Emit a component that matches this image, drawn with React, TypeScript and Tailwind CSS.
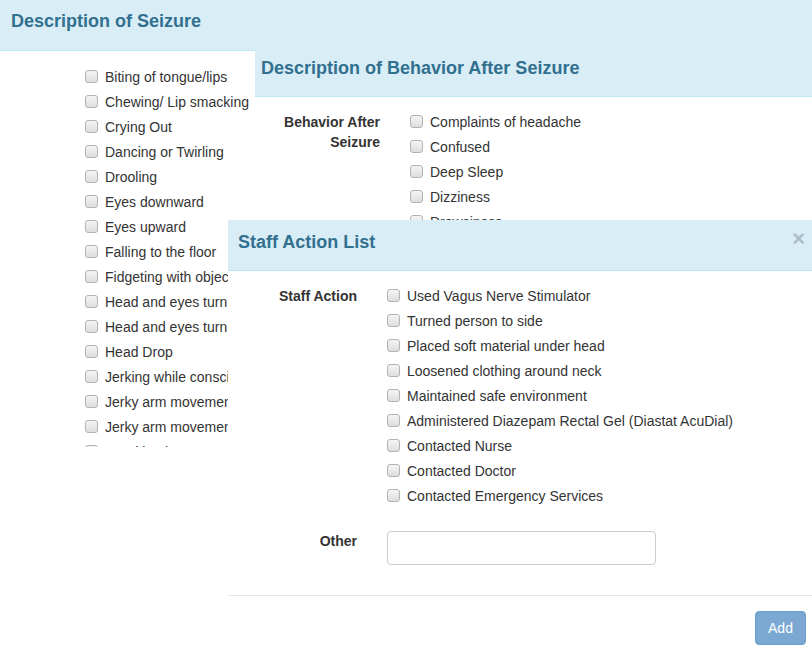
import React from "react";

const seizureItems = [
  "Biting of tongue/lips",
  "Chewing/ Lip smacking",
  "Crying Out",
  "Dancing or Twirling",
  "Drooling",
  "Eyes downward",
  "Eyes upward",
  "Falling to the floor",
  "Fidgeting with objects",
  "Head and eyes turn left",
  "Head and eyes turn right",
  "Head Drop",
  "Jerking while conscious",
  "Jerky arm movement left",
  "Jerky arm movement right",
  "Head back",
];

const behaviorItems = [
  "Complaints of headache",
  "Confused",
  "Deep Sleep",
  "Dizziness",
  "Drowsiness",
  "Fatigue",
];

const staffItems = [
  "Used Vagus Nerve Stimulator",
  "Turned person to side",
  "Placed soft material under head",
  "Loosened clothing around neck",
  "Maintained safe environment",
  "Administered Diazepam Rectal Gel (Diastat AcuDial)",
  "Contacted Nurse",
  "Contacted Doctor",
  "Contacted Emergency Services",
];

function Box() {
  return (
    <span className="block w-[13px] h-[13px] shrink-0 rounded-[3px] border border-[#b3b3b3] bg-gradient-to-b from-[#f4f4f4] to-[#dedede]" />
  );
}

function CheckRow({ label }: { label: string }) {
  return (
    <div className="flex items-center h-[25px] gap-[7px] whitespace-nowrap">
      <Box />
      <span className="leading-[20px]">{label}</span>
    </div>
  );
}

function Header({ title, pad, height, top }: { title: string; pad: string; height: string; top: string }) {
  return (
    <div className={`bg-[#d9edf7] border-b border-[#bce8f1] ${height} ${pad} ${top}`}>
      <h4 className="text-[18px] font-bold leading-[24px] text-[#31708f]">{title}</h4>
    </div>
  );
}

export default function App() {
  return (
    <div className="relative w-[812px] h-[649px] overflow-hidden bg-white font-['Liberation_Sans',Arial,sans-serif] text-[14px] text-[#333]">
      {/* Modal 1 */}
      <div className="absolute left-0 top-0 w-[812px] h-[649px] bg-white">
        <Header title="Description of Seizure" pad="pl-[11px]" height="h-[51px]" top="pt-[9px]" />
        <div className="pt-[13px]">
          <div className="ml-[85px] h-[383px] overflow-hidden">
            {seizureItems.map((s) => (
              <CheckRow key={s} label={s} />
            ))}
          </div>
        </div>
      </div>

      {/* Modal 2 */}
      <div className="absolute left-[255px] top-[42px] w-[557px] h-[607px] bg-white">
        <Header title="Description of Behavior After Seizure" pad="pl-[6px]" height="h-[55px]" top="pt-[14px]" />
        <div className="flex pt-[12px]">
          <div className="w-[125px] pl-[15px] pt-[3px] text-right font-bold leading-[20px]">
            Behavior After Seizure
          </div>
          <div className="ml-[30px]">
            {behaviorItems.map((s) => (
              <CheckRow key={s} label={s} />
            ))}
          </div>
        </div>
      </div>

      {/* Modal 3 */}
      <div className="absolute left-[228px] top-[220px] w-[584px] h-[429px] bg-white flex flex-col">
        <div className="flex justify-between bg-[#d9edf7] border-b border-[#bce8f1] h-[51px] pl-[10px] pr-[7px] pt-[10px]">
          <h4 className="text-[18px] font-bold leading-[24px] text-[#31708f]">Staff Action List</h4>
          <span className="text-[22px] font-bold leading-[18px] text-black opacity-20">×</span>
        </div>
        <div className="h-[324px] pt-[12px]">
          <div className="flex">
            <div className="w-[129px] pt-[3px] text-right font-bold leading-[20px]">Staff Action</div>
            <div className="ml-[30px]">
              {staffItems.map((s) => (
                <CheckRow key={s} label={s} />
              ))}
            </div>
          </div>
          <div className="flex mt-[23px]">
            <div className="w-[129px] text-right font-bold leading-[20px]">Other</div>
            <input
              type="text"
              className="ml-[30px] w-[269px] h-[34px] rounded-[4px] border border-[#cccccc] bg-white px-3 outline-none"
            />
          </div>
        </div>
        <div className="border-t border-[#e5e5e5] flex justify-end pt-[15px] pr-[6px]">
          <button className="h-[34px] w-[51px] rounded-[4px] border border-[#6e9dc8] bg-[#7aa8d3] text-white text-[14px] leading-[20px]">
            Add
          </button>
        </div>
      </div>
    </div>
  );
}
